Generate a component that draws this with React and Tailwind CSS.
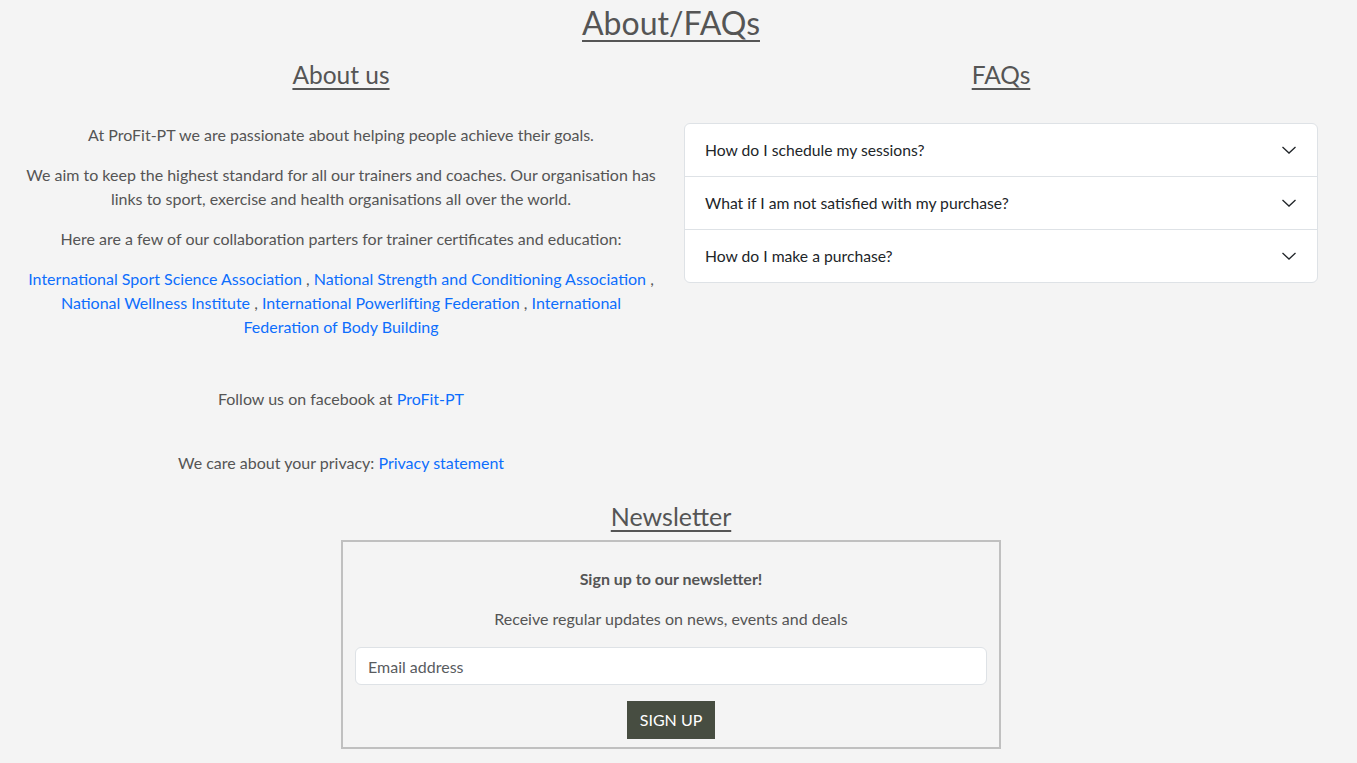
import React from 'react';

const faqs = [
  'How do I schedule my sessions?',
  'What if I am not satisfied with my purchase?',
  'How do I make a purchase?',
];

const partners = [
  'International Sport Science Association',
  'National Strength and Conditioning Association',
  'National Wellness Institute',
  'International Powerlifting Federation',
  'International Federation of Body Building',
];

const Chevron = () => (
  <svg width="16" height="16" viewBox="0 0 16 16" fill="none" className="shrink-0">
    <path d="M1.5 5 L8 11 L14.5 5" stroke="#212529" strokeWidth="1.3" strokeLinejoin="miter" />
  </svg>
);

export default function App() {
  return (
    <div className="min-h-screen bg-[#f4f4f4] text-[#555] text-[16px] leading-6 font-['Lato','Liberation_Sans',sans-serif]">
      <div className="pl-[11px] pr-[26px]">
        <h1 className="text-center text-[32px] leading-[44px] underline decoration-2 underline-offset-[5px] pt-[1px]">
          About/FAQs
        </h1>

        <div className="grid grid-cols-2">
          {/* About us column */}
          <div className="px-[13px] text-center">
            <h2 className="text-[24.5px] leading-8 underline decoration-[1.5px] underline-offset-4 mt-[14px]">
              About us
            </h2>
            <p className="mt-[32px]">At ProFit-PT we are passionate about helping people achieve their goals.</p>
            <p className="mt-4">
              We aim to keep the highest standard for all our trainers and coaches. Our organisation has links to sport, exercise and health organisations all over the world.
            </p>
            <p className="mt-4">Here are a few of our collaboration parters for trainer certificates and education:</p>
            <p className="mt-4">
              {partners.map((p, i) => (
                <React.Fragment key={p}>
                  <a href="#" className="text-[#0d6efd]">{p}</a>
                  {i < partners.length - 1 && ' , '}
                </React.Fragment>
              ))}
            </p>
            <p className="mt-[48px]">
              Follow us on facebook at <a href="#" className="text-[#0d6efd]">ProFit-PT</a>
            </p>
            <p className="mt-[40px]">
              We care about your privacy: <a href="#" className="text-[#0d6efd]">Privacy statement</a>
            </p>
          </div>

          {/* FAQ column */}
          <div className="px-[13px]">
            <h2 className="text-center text-[24.5px] leading-8 underline decoration-[1.5px] underline-offset-4 mt-[14px]">
              FAQs
            </h2>
            <div className="mt-[32px] bg-white border border-[#dee2e6] rounded-[6px]">
              {faqs.map((q, i) => (
                <button
                  key={q}
                  className={`w-full flex items-center justify-between px-5 py-[14px] text-left text-[15.7px] text-[#212529] ${
                    i > 0 ? 'border-t border-[#dee2e6]' : ''
                  }`}
                >
                  <span>{q}</span>
                  <Chevron />
                </button>
              ))}
            </div>
          </div>
        </div>

        {/* Newsletter */}
        <h2 className="text-center text-[25px] leading-8 underline decoration-[1.5px] underline-offset-4 mt-[25px]">
          Newsletter
        </h2>
        <div className="mx-auto mt-[8px] w-[660px] border-2 border-[#c0c0c0] px-3 pt-[25px] pb-[8px] text-center">
          <p className="font-bold text-[16px]">Sign up to our newsletter!</p>
          <p className="mt-4">Receive regular updates on news, events and deals</p>
          <input
            type="email"
            placeholder="Email address"
            className="mt-4 block w-full h-[38px] bg-white border border-[#dee2e6] rounded-[6px] px-3 text-[#212529] placeholder:text-[#595c5f] outline-none"
          />
          <button className="mt-4 h-[38px] w-[88px] bg-[#474d41] text-white uppercase text-[16px]">
            Sign up
          </button>
        </div>
      </div>
    </div>
  );
}
